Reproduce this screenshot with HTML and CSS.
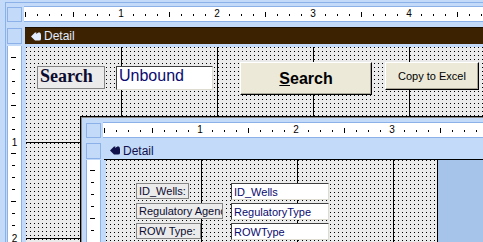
FILE: index.html
```html
<!DOCTYPE html>
<html lang="en">
<head>
    <meta charset="UTF-8">
    <title>Form Design</title>
    <link rel="stylesheet" href="styles.css">
</head>
<body>
    <!-- main form designer -->
    <div class="frame">
        <div class="dv-top">
            <div class="corner"></div>
            <div class="hruler">
                <div class="marks">
                    <span class="inch"><b>1</b></span>
                    <span class="inch"><b>2</b></span>
                    <span class="inch"><b>3</b></span>
                    <span class="inch"><b>4</b></span>
                </div>
            </div>
        </div>

        <div class="dv-section">
            <div class="vhead"></div>
            <div class="section-bar dark">
                <svg class="sel-icon" width="10" height="9" viewBox="0 0 10 9"><path d="M0 4.5 L4 0.5 L5.5 0.5 L4.8 2 L8 0.3 Q10 0.5 10 3 L10 7 Q10 8.6 8 8.6 L4 8.6 L3 7.6 Z" fill="currentColor"/></svg>
                <span>Detail</span>
            </div>
        </div>

        <div class="dv-body">
            <div class="vruler">
                <span class="vinch"><b>1</b></span>
                <span class="vinch"><b>2</b></span>
            </div>
            <div class="grid outer-grid">
                <div class="label lbl-search">Search</div>
                <div class="textbox tb-unbound">Unbound</div>
                <div class="btn btn-search"><u>S</u>earch</div>
                <div class="btn btn-copy">Copy to Excel</div>
            </div>
        </div>
    </div>

    <!-- subform window -->
    <div class="subwin">
        <div class="dv-top">
            <div class="corner"></div>
            <div class="hruler">
                <div class="marks">
                    <span class="inch"><b>1</b></span>
                    <span class="inch"><b>2</b></span>
                    <span class="inch"><b>3</b></span>
                </div>
            </div>
        </div>

        <div class="dv-section">
            <div class="vhead"></div>
            <div class="section-bar light">
                <svg class="sel-icon" width="10" height="9" viewBox="0 0 10 9"><path d="M0 4.5 L4 0.5 L5.5 0.5 L4.8 2 L8 0.3 Q10 0.5 10 3 L10 7 Q10 8.6 8 8.6 L4 8.6 L3 7.6 Z" fill="currentColor"/></svg>
                <span>Detail</span>
            </div>
        </div>

        <div class="dv-body">
            <div class="vruler"></div>
            <div class="grid inner-grid">
                <div class="label lbl-small row1 w-id">ID_Wells:</div>
                <div class="label lbl-small row2 w-reg">Regulatory Agency:</div>
                <div class="label lbl-small row3 w-row">ROW Type:</div>
                <div class="textbox tb-small row1">ID_Wells</div>
                <div class="textbox tb-small row2">RegulatoryType</div>
                <div class="textbox tb-small row3">ROWType</div>
            </div>
            <div class="blank"></div>
        </div>
    </div>
</body>
</html>
```

FILE: styles.css
```css
* {
    margin: 0;
    padding: 0;
    box-sizing: border-box;
}

body {
    width: 483px;
    height: 242px;
    overflow: hidden;
    position: relative;
    background: #c3daf9;
    font-family: 'Liberation Sans', Arial, sans-serif;
}

.frame {
    display: flex;
    flex-direction: column;
    height: 240px;
    margin: 2px 0 0 5px;
    padding: 3px 0 0 1px;
    border-top: 1px solid #8cb0e8;
    border-left: 1px solid #8cb0e8;
}

/* rulers */
.dv-top {
    display: flex;
    gap: 2px;
    height: 16px;
    flex-shrink: 0;
}

.corner {
    width: 15px;
    height: 15px;
    margin-top: 1px;
    background: #c3daf9;
    border: 1px solid #8cb0e8;
}

.hruler {
    flex: 1;
    overflow: hidden;
    background-color: #fff;
    background-image:
        linear-gradient(90deg, #000 1px, transparent 1px),
        linear-gradient(90deg, #000 1px, transparent 1px);
    background-size: 12px 2px, 48px 5px;
    background-position: 1px 7px, 1px 5px;
    background-repeat: repeat-x;
    border-top: 1px solid #8cb0e8;
    border-bottom: 1px solid #8cb0e8;
}

.marks {
    display: flex;
    padding-left: 1px;
}

.inch {
    flex: 0 0 96px;
    display: flex;
    justify-content: flex-end;
}

.inch b {
    font-weight: normal;
    font-size: 10px;
    line-height: 14px;
    padding: 0 2px;
    background: #fff;
    transform: translateX(50%);
}

.vruler {
    width: 15px;
    flex-shrink: 0;
    display: flex;
    flex-direction: column;
    background-color: #fff;
    background-image:
        linear-gradient(180deg, #000 1px, transparent 1px),
        linear-gradient(180deg, #000 1px, transparent 1px);
    background-size: 3px 12px, 5px 48px;
    background-position: 4px 11px, 3px 11px;
    background-repeat: repeat-y;
    border-left: 1px solid #8cb0e8;
    border-right: 1px solid #8cb0e8;
}

.vinch {
    flex: 0 0 96px;
    display: flex;
    align-items: flex-end;
    justify-content: center;
}

.vinch b {
    font-weight: normal;
    font-size: 10px;
    line-height: 11px;
    background: #fff;
    transform: translateY(50%);
}

/* section header */
.dv-section {
    display: flex;
    margin-top: 5px;
    height: 18px;
    flex-shrink: 0;
}

.vhead {
    width: 15px;
    height: 16px;
    margin-top: 1px;
    background: #c3daf9;
    border: 1px solid #8cb0e8;
}

.section-bar {
    flex: 1;
    display: flex;
    align-items: center;
    gap: 3px;
    margin-left: 3px;
    padding-left: 6px;
    font-size: 12px;
}

.section-bar.dark {
    height: 17px;
    background: #3c2200;
    border-top: 1px solid #1c0f00;
    color: #e2ecff;
}

.section-bar.light {
    height: 18px;
    background: #c3daf9;
    border-bottom: 1px solid #000;
    color: #10104a;
}

.sel-icon {
    display: block;
}

/* design grid */
.dv-body {
    flex: 1;
    display: flex;
    margin-top: 1px;
}

.grid {
    position: relative;
    margin-left: 4px;
    background-color: #ebebeb;
    background-image:
        linear-gradient(90deg, transparent 95px, #000 95px, #000 96px, transparent 96px),
        linear-gradient(180deg, transparent 95px, #000 95px, #000 96px, transparent 96px),
        conic-gradient(at 1px 1px, transparent 75%, #000 0);
    background-size: 96px 100%, 100% 96px, 4px 4px;
    background-repeat: repeat-x, repeat-y, repeat;
}

.outer-grid {
    flex: 1;
    margin-top: 1px;
}

.inner-grid {
    width: 332px;
    margin-left: 5px;
    border-right: 1px solid #000;
}

.blank {
    flex: 1;
    background: #a6c3ea;
}

/* controls */
.label {
    position: absolute;
    overflow: hidden;
    white-space: nowrap;
    background: #ebebeb;
    border: 1px solid #858585;
    color: #0c0c30;
}

.lbl-search {
    left: 11px;
    top: 19px;
    width: 68px;
    height: 23px;
    padding-left: 2px;
    font-family: 'Liberation Serif', 'Times New Roman', serif;
    font-weight: bold;
    font-size: 18px;
    line-height: 18px;
}

.textbox {
    position: absolute;
    overflow: hidden;
    white-space: nowrap;
    background: #fff;
    border: 1px solid;
    border-color: #404040 #dedbd0 #dedbd0 #404040;
    color: #0a0a70;
}

.tb-unbound {
    left: 90px;
    top: 19px;
    width: 97px;
    height: 24px;
    padding-left: 2px;
    font-size: 16px;
    line-height: 17px;
}

.btn {
    position: absolute;
    background: #ece9d8;
    border: 1px solid;
    border-color: #fff #000 #000 #fff;
    box-shadow: inset -1px -1px #aca899;
    text-align: center;
    color: #000;
}

.btn-search {
    left: 214px;
    top: 15px;
    width: 132px;
    height: 33px;
    font-weight: bold;
    font-size: 16px;
    line-height: 32px;
}

.btn-copy {
    left: 359px;
    top: 15px;
    width: 94px;
    height: 28px;
    font-size: 11px;
    line-height: 26px;
}

.lbl-small {
    left: 30px;
    height: 16px;
    padding: 1px 0 0 2px;
    font-size: 11px;
    line-height: 13px;
}

.w-id { width: 53px; }
.w-reg { width: 87px; }
.w-row { width: 65px; }

.tb-small {
    left: 125px;
    width: 98px;
    height: 17px;
    padding: 1px 0 0 2px;
    font-size: 11px;
    line-height: 14px;
}

.row1 { top: 23px; }
.row2 { top: 43px; }
.row3 { top: 63px; }

/* subform window */
.subwin {
    position: absolute;
    left: 80px;
    top: 116px;
    width: 410px;
    height: 132px;
    display: flex;
    flex-direction: column;
    padding: 5px 0 0 5px;
    background: #c3daf9;
    border-top: 1px solid #000;
    border-left: 1px solid #000;
    box-shadow: inset 1px 1px #8c8c8c;
}

.subwin .dv-section {
    margin-top: 4px;
}

.subwin .dv-body {
    margin-top: 0;
}

.subwin .vruler {
    background-position: 4px 10px, 3px 10px;
}
```
